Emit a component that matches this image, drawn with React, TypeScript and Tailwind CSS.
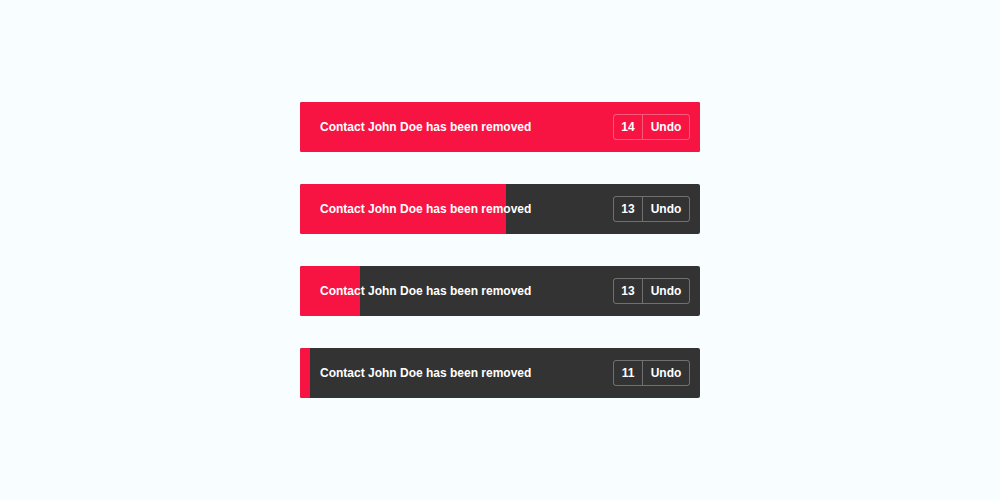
const toasts = [
  { fill: 400, count: 14 },
  { fill: 206, count: 13 },
  { fill: 60, count: 13 },
  { fill: 10, count: 11 },
];

function Toast({ fill, count }: { fill: number; count: number }) {
  return (
    <div className="relative w-[400px] h-[50px] rounded-[2px] overflow-hidden bg-[#333333]">
      <div className="absolute left-0 top-0 h-full bg-[#f71443]" style={{ width: fill }} />
      <div className="relative flex items-center justify-between h-full pl-5 pr-[10px] font-['Liberation_Sans',Arial,sans-serif]">
        <span className="text-[12px] font-bold text-white">Contact John Doe has been removed</span>
        <div className="flex h-[26px] rounded-[3px] border border-white/30 text-[12px] font-bold text-white">
          <span className="flex items-center justify-center w-[29px] border-r border-white/30">{count}</span>
          <span className="flex items-center justify-center w-[46px]">Undo</span>
        </div>
      </div>
    </div>
  );
}

export default function App() {
  return (
    <div className="w-[1000px] h-[500px] bg-[#f8fdff] flex flex-col items-center pt-[102px] gap-8">
      {toasts.map((t, i) => (
        <Toast key={i} fill={t.fill} count={t.count} />
      ))}
    </div>
  );
}
